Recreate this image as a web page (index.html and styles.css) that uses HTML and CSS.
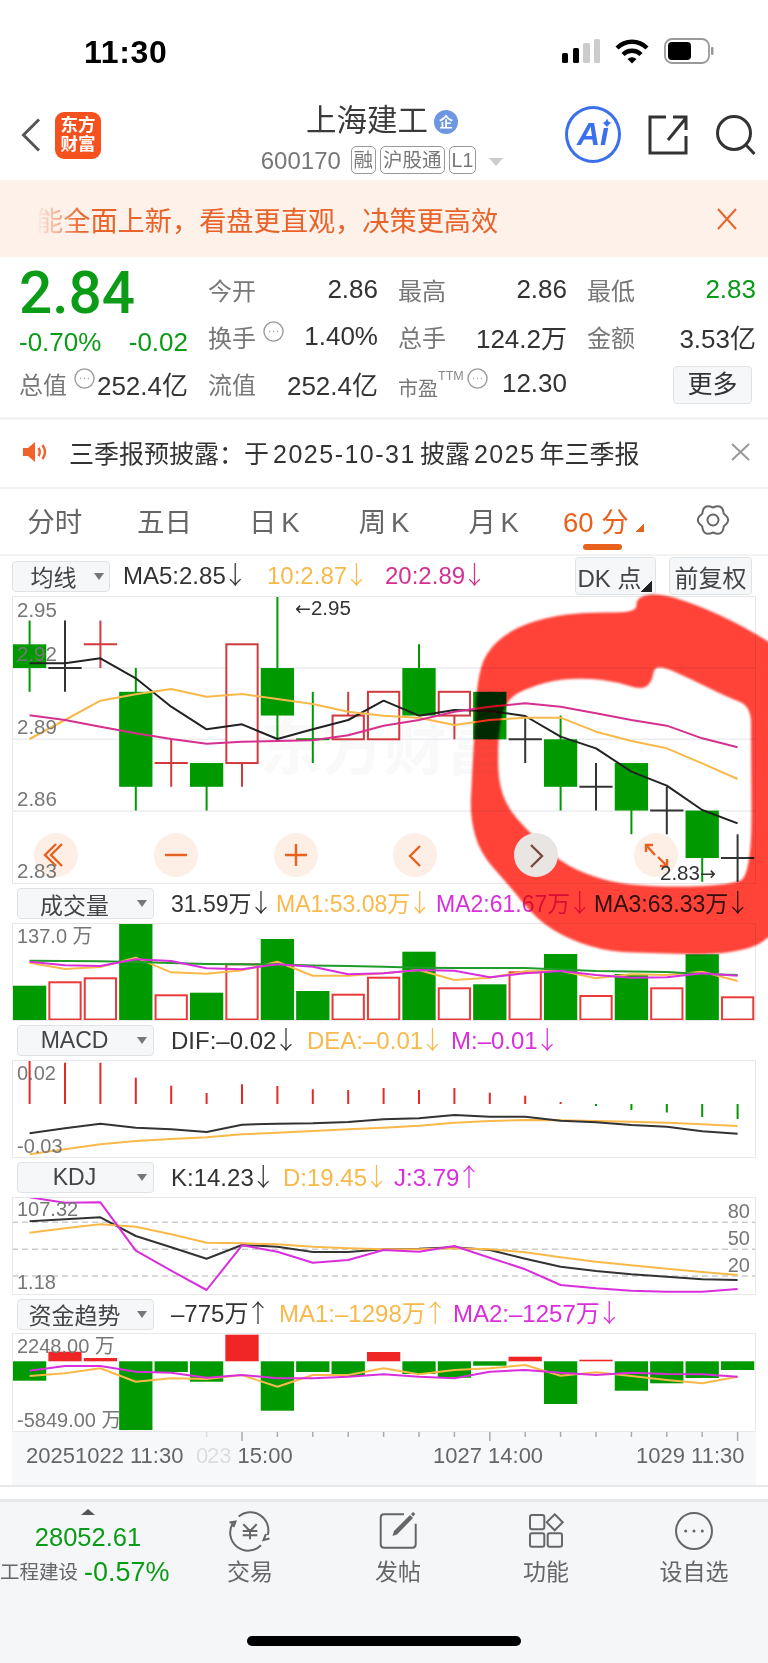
FILE: index.html
```html
<!DOCTYPE html>
<html lang="zh">
<head>
    <meta charset="UTF-8">
    <meta name="viewport" content="width=device-width, initial-scale=1.0">
    <title>上海建工 600170</title>
    <link rel="stylesheet" href="styles.css">
</head>
<body>
<div class="page">

    <!-- Barra di stato -->
    <div class="status">
        <span class="time">11:30</span>
        <svg class="status-icons" width="154" height="27" viewBox="0 0 154 27">
            <rect x="0" y="15" width="6" height="10" rx="1.5" fill="#000"/>
            <rect x="11" y="10" width="6" height="15" rx="1.5" fill="#000"/>
            <rect x="21" y="5" width="7" height="20" rx="1.5" fill="#ccc"/>
            <rect x="32" y="1" width="6" height="24" rx="1.5" fill="#ccc"/>
            <g transform="translate(53 1)">
                <path d="M2 9A21.2 21.2 0 0 1 32 9" fill="none" stroke="#000" stroke-width="4.4"/>
                <path d="M8 15.5A12.7 12.7 0 0 1 26 15.5" fill="none" stroke="#000" stroke-width="4.4"/>
                <path d="M12.5 20L17 24.5L21.5 20A6.4 6.4 0 0 0 12.5 20Z" fill="#000"/>
            </g>
            <rect x="103" y="1" width="44" height="24" rx="7" fill="none" stroke="#999" stroke-width="1.8"/>
            <rect x="106" y="4" width="23" height="18" rx="4" fill="#000"/>
            <rect x="149" y="9" width="2.5" height="8" rx="1" fill="#999"/>
        </svg>
    </div>

    <!-- Titolo -->
    <div class="nav">
        <div class="nav-left">
            <svg class="back" width="20" height="34" viewBox="0 0 20 34"><path d="M18 1.5L2.5 17L18 32.5" fill="none" stroke="#555" stroke-width="3"/></svg>
            <div class="logo"><span>东方</span><span>财富</span></div>
        </div>
        <div class="nav-title">
            <div class="name">上海建工<span class="badge">企</span></div>
            <div class="code">600170
                <span class="tag tag-first">融</span><span class="tag">沪股通</span><span class="tag">L1</span><span class="code-caret"></span>
            </div>
        </div>
        <div class="nav-right">
            <div class="ai">Ai<svg class="ai-star" width="10" height="10" viewBox="0 0 10 10"><path d="M5 0Q5.6 4.4 10 5Q5.6 5.6 5 10Q4.4 5.6 0 5Q4.4 4.4 5 0Z" fill="#3a6fee"/></svg></div>
            <svg class="share" width="40" height="40" viewBox="0 0 40 40"><path d="M18 2H2V38H38V21M20 25L38 3M25 2H38V15" fill="none" stroke="#333" stroke-width="3"/></svg>
            <svg class="search" width="40" height="40" viewBox="0 0 40 40"><circle cx="18" cy="18" r="16.5" fill="none" stroke="#333" stroke-width="3"/><path d="M30 30L38.5 39" fill="none" stroke="#333" stroke-width="3"/></svg>
        </div>
    </div>

    <!-- Avviso arancione -->
    <div class="promo">
        <span class="promo-text">能全面上新，看盘更直观，决策更高效</span>
        <svg class="promo-close" width="20" height="22" viewBox="0 0 20 22"><path d="M1 1L19 21M19 1L1 21" fill="none" stroke="#e8632a" stroke-width="2"/></svg>
    </div>

    <!-- Quotazione -->
    <div class="quote">
        <div class="cell"><span class="price">2.84</span></div>
        <div class="cell"><span class="lab">今开</span><span class="val">2.86</span></div>
        <div class="cell"><span class="lab">最高</span><span class="val">2.86</span></div>
        <div class="cell"><span class="lab">最低</span><span class="val down">2.83</span></div>

        <div class="cell cell-change"><span class="val down">-0.70%</span><span class="val down">-0.02</span></div>
        <div class="cell"><span class="lab">换手</span><svg class="hint" viewBox="0 0 22 22"><circle cx="11" cy="11" r="10" fill="none" stroke="#999" stroke-width="1.4"/><path d="M6.5 11h1M10.5 11h1M14.5 11h1" stroke="#999" stroke-width="1.6"/></svg><span class="val">1.40%</span></div>
        <div class="cell"><span class="lab">总手</span><span class="val">124.2万</span></div>
        <div class="cell"><span class="lab">金额</span><span class="val">3.53亿</span></div>

        <div class="cell"><span class="lab">总值</span><svg class="hint" viewBox="0 0 22 22"><circle cx="11" cy="11" r="10" fill="none" stroke="#999" stroke-width="1.4"/><path d="M6.5 11h1M10.5 11h1M14.5 11h1" stroke="#999" stroke-width="1.6"/></svg><span class="val">252.4亿</span></div>
        <div class="cell"><span class="lab">流值</span><span class="val">252.4亿</span></div>
        <div class="cell"><span class="lab lab-small">市盈</span><span class="ttm">TTM</span><svg class="hint hint-tight" viewBox="0 0 22 22"><circle cx="11" cy="11" r="10" fill="none" stroke="#999" stroke-width="1.4"/><path d="M6.5 11h1M10.5 11h1M14.5 11h1" stroke="#999" stroke-width="1.6"/></svg><span class="val">12.30</span></div>
        <div class="cell cell-more"><span class="more">更多</span></div>
    </div>

    <div class="sep sep-thick"></div>

    <!-- Annuncio -->
    <div class="notice">
        <svg class="horn" width="26" height="20" viewBox="0 0 26 20"><path d="M1 6H6L13 0V20L6 14H1Z" fill="#f0622a"/><path d="M16.5 6Q19 10 16.5 14M20.5 3Q25.5 10 20.5 17" fill="none" stroke="#f0622a" stroke-width="2.4"/></svg>
        <span class="notice-text">三季报预披露：于<span class="num">2025-10-31</span>披露<span class="num">2025</span>年三季报</span>
        <svg class="notice-close" width="19" height="18" viewBox="0 0 19 18"><path d="M1 1L18 17M18 1L1 17" fill="none" stroke="#999" stroke-width="2"/></svg>
    </div>

    <div class="sep"></div>

    <!-- Schede periodo -->
    <div class="tabs">
        <span class="tab">分时</span>
        <span class="tab">五日</span>
        <span class="tab">日 K</span>
        <span class="tab">周 K</span>
        <span class="tab">月 K</span>
        <span class="tab tab-on">60 分<i class="tab-corner"></i></span>
        <svg class="gear" width="34" height="34" viewBox="0 0 34 34"><path d="M27.8 10.75Q36.5 17 27.8 23.25Q26.75 33.9 17 29.5Q7.25 33.9 6.2 23.25Q-2.5 17 6.2 10.75Q7.25 .1 17 4.5Q26.75 .1 27.8 10.75Z" fill="none" stroke="#666" stroke-width="2"/><circle cx="17" cy="17" r="5.5" fill="none" stroke="#666" stroke-width="2"/></svg>
    </div>

    <div class="sep"></div>

    <!-- K-line -->
    <div class="row row-first">
        <div class="chip chip-ma"><span class="chip-name">均线</span><i class="caret"></i></div>
        <div class="stats stats-ma">
            <span class="stat">MA5:2.85<b>↓</b></span>
            <span class="stat orange">10:2.87<b>↓</b></span>
            <span class="stat pink">20:2.89<b>↓</b></span>
        </div>
        <div class="chip chip-plain chip-dk">DK 点<i class="chip-corner"></i></div>
        <div class="chip chip-plain chip-fq">前复权</div>
    </div>
    <svg class="plot plot-k" viewBox="12 596 744 288">
        <text class="mark" x="260" y="770">东方财富</text>
        <g id="kGrid"></g>
        <g id="kBody"></g>
        <text class="scale" x="17" y="617">2.95</text>
        <text class="scale" x="17" y="661">2.92</text>
        <text class="scale" x="17" y="734">2.89</text>
        <text class="scale" x="17" y="806">2.86</text>
        <text class="note" x="295" y="615"><tspan class="note-arrow">←</tspan>2.95</text>
        <g class="zoom-btn"><circle cx="56" cy="855" r="22"/><path d="M62 844L51 855L62 866M56 844L45 855L56 866"/></g>
        <g class="zoom-btn"><circle cx="176" cy="855" r="22"/><path d="M165 855H187"/></g>
        <g class="zoom-btn"><circle cx="296" cy="855" r="22"/><path d="M285 855H307M296 844V866"/></g>
        <g class="zoom-btn"><circle cx="415" cy="855" r="22"/><path d="M420 846L410 856L420 866"/></g>
        <g class="zoom-btn"><circle cx="656" cy="855" r="22"/><path d="M646 845L655 855M646 852V845H653M658 857L667 866M667 859V866H660"/></g>
        <text class="scale" x="17" y="878">2.83</text>
        <text class="note" x="660" y="880">2.83<tspan class="note-arrow">→</tspan></text>
    </svg>

    <!-- Volume -->
    <div class="row">
        <div class="chip chip-wide"><span class="chip-name">成交量</span><i class="caret"></i></div>
        <div class="stats stats-vol">
            <span class="stat">31.59万<b>↓</b></span>
            <span class="stat orange">MA1:53.08万<b>↓</b></span>
            <span class="stat violet">MA2:61.67万<b>↓</b></span>
            <span class="stat">MA3:63.33万<b>↓</b></span>
        </div>
    </div>
    <svg class="plot" viewBox="12 923 744 98">
        <g id="volBody"></g>
        <text class="scale scale-sm" x="17" y="943">137.0 万</text>
    </svg>

    <!-- MACD -->
    <div class="row">
        <div class="chip chip-wide"><span class="chip-name">MACD</span><i class="caret"></i></div>
        <div class="stats stats-macd">
            <span class="stat">DIF:–0.02<b>↓</b></span>
            <span class="stat orange">DEA:–0.01<b>↓</b></span>
            <span class="stat violet">M:–0.01<b>↓</b></span>
        </div>
    </div>
    <svg class="plot" viewBox="12 1060 744 98">
        <g id="macdBody"></g>
        <text class="scale scale-sm" x="17" y="1080">0.02</text>
        <text class="scale scale-sm" x="17" y="1153">-0.03</text>
    </svg>

    <!-- KDJ -->
    <div class="row">
        <div class="chip chip-wide"><span class="chip-name">KDJ</span><i class="caret"></i></div>
        <div class="stats stats-kdj">
            <span class="stat">K:14.23<b>↓</b></span>
            <span class="stat orange">D:19.45<b>↓</b></span>
            <span class="stat violet">J:3.79<b>↑</b></span>
        </div>
    </div>
    <svg class="plot" viewBox="12 1197 744 98">
        <g id="kdjBody"></g>
        <text class="scale scale-sm" x="17" y="1216">107.32</text>
        <text class="scale scale-sm" x="17" y="1289">1.18</text>
        <text class="scale scale-sm scale-end" x="750" y="1218">80</text>
        <text class="scale scale-sm scale-end" x="750" y="1245">50</text>
        <text class="scale scale-sm scale-end" x="750" y="1272">20</text>
    </svg>

    <!-- Flusso di capitale -->
    <div class="row row-short">
        <div class="chip chip-wide"><span class="chip-name">资金趋势</span><i class="caret"></i></div>
        <div class="stats stats-flow">
            <span class="stat">–775万<b>↑</b></span>
            <span class="stat orange">MA1:–1298万<b>↑</b></span>
            <span class="stat violet">MA2:–1257万<b>↓</b></span>
        </div>
    </div>
    <svg class="plot plot-flow" viewBox="12 1333 744 99">
        <g id="flowBody"></g>
        <text class="scale scale-sm" x="17" y="1353">2248.00 万</text>
        <text class="scale scale-sm" x="17" y="1427">-5849.00 万</text>
    </svg>

    <svg class="plot-axis" viewBox="12 1432 744 53">
        <g id="axisTicks"></g>
        <text class="tick-label" x="26" y="1463">20251022 11:30</text>
        <text class="tick-label tick-faded" x="196" y="1463">0</text>
        <text class="tick-label" x="207" y="1463"><tspan class="tick-faded">23</tspan> 15:00</text>
        <text class="tick-label" x="433" y="1463">1027 14:00</text>
        <text class="tick-label" x="636" y="1463">1029 11:30</text>
    </svg>

    <div class="gap-line"></div>

    <!-- Barra inferiore -->
    <div class="footer">
        <div class="foot-grid">
            <div class="foot-index">
                <i class="foot-up"></i>
                <div class="foot-value">28052.61</div>
                <div class="foot-sector"><span>工程建设</span><b>-0.57%</b></div>
            </div>
            <div class="foot-item">
                <svg class="foot-icon" width="44" height="44" viewBox="0 0 44 44"><path d="M5 14A18 18 0 0 0 33 36.3M1.5 13.5L7.5 12.5L5.5 18M10.7 7.5A18 18 0 0 1 39.7 26M41.5 29.5L35.5 31L38 25M15.3 15.3L22 22L28.7 15.3M22 22V30.3M14.7 22H29.3M14.7 26.3H29.3"/></svg>
                <span>交易</span>
            </div>
            <div class="foot-item">
                <svg class="foot-icon" width="44" height="44" viewBox="0 0 44 44"><path d="M28 5.3H8Q4.7 5.3 4.7 8.7V35.3Q4.7 38.7 8 38.7H36.4Q39.7 38.7 39.7 35.3V14.7"/><path class="solid" d="M16.5 27L18 22L34 6L37 9L21 25.5Z"/><path class="solid" d="M35 5L36.5 3.5Q37.5 3 38.5 4Q39.5 5 38.5 6L37 7.5Z"/></svg>
                <span>发帖</span>
            </div>
            <div class="foot-item">
                <svg class="foot-icon" width="44" height="44" viewBox="0 0 44 44"><rect x="6" y="6" width="14.3" height="14.3" rx="2"/><rect x="6" y="24.3" width="14.3" height="13.4" rx="2"/><rect x="23.7" y="24.3" width="14.3" height="13.4" rx="2"/><path d="M30.7 5.3L38.7 13.3L30.7 21.3L22.7 13.3Z"/></svg>
                <span>功能</span>
            </div>
            <div class="foot-item">
                <svg class="foot-icon" width="44" height="44" viewBox="0 0 44 44"><circle cx="22" cy="22" r="18"/><circle class="solid" cx="13.7" cy="22" r="1.5"/><circle class="solid" cx="22" cy="22" r="1.5"/><circle class="solid" cx="30.3" cy="22" r="1.5"/></svg>
                <span>设自选</span>
            </div>
        </div>
        <div class="home-bar"></div>
    </div>

    <!-- Cerchio rosso disegnato sopra lo screenshot -->
    <svg class="ring" width="768" height="1663" viewBox="0 0 768 1663"><path id="ringPath"/></svg>
    <svg class="ring-btn" width="44" height="44" viewBox="0 0 44 44"><circle cx="22" cy="22" r="22" fill="#e9e5e3"/><path d="M17 12L28 23L17 34" fill="none" stroke="#7a4a3c" stroke-width="2.4"/></svg>
</div>
<script src="charts.js"></script>
</body>
</html>
```

FILE: styles.css
```css
/* Base */
html, body {
    margin: 0;
    background-color: #fff;
}

body {
    font-family: "Liberation Sans", "Noto Sans CJK SC", sans-serif;
    color: #333;
}

.page {
    position: relative;
    width: 768px;
    height: 1663px;
    overflow: hidden;
    background-color: #fff;
}

/* Status bar */
.status {
    height: 90px;
    display: flex;
    justify-content: space-between;
    box-sizing: border-box;
    padding: 36px 52px 0 84px;
}

.time {
    font-size: 32px;
    line-height: 32px;
    font-weight: 700;
    letter-spacing: .7px;
    color: #000;
}

.status-icons {
    margin-top: 2px;
}

/* Nav */
.nav {
    height: 90px;
    display: grid;
    grid-template-columns: 200px 364px 1fr;
}

.nav-left {
    display: flex;
    align-items: center;
    padding-left: 21px;
}

.logo {
    margin-left: 14px;
    width: 46px;
    height: 47px;
    border-radius: 9px;
    background-color: #f4511e;
    color: #fff;
    font-size: 17.5px;
    line-height: 19px;
    font-weight: 700;
    display: flex;
    flex-direction: column;
    align-items: center;
    justify-content: center;
}

.nav-title {
    text-align: center;
    padding-top: 13px;
}

.name {
    font-size: 30.5px;
    line-height: 34px;
    color: #3a3a3a;
}

.badge {
    display: inline-block;
    width: 24px;
    height: 24px;
    margin-left: 6px;
    border-radius: 50%;
    background-color: #6d97e0;
    color: #fff;
    font-size: 14px;
    line-height: 24px;
    font-weight: 700;
    vertical-align: 4px;
}

.code {
    margin-top: 9px;
    font-size: 24px;
    line-height: 30px;
    color: #777;
    white-space: nowrap;
}

.tag {
    display: inline-block;
    box-sizing: border-box;
    height: 28px;
    margin-left: 4px;
    padding: 0 2px;
    border: 1px solid #999;
    border-radius: 5px;
    font-size: 19.5px;
    line-height: 26px;
    vertical-align: 2px;
}

.tag-first {
    margin-left: 3px;
}

.code-caret {
    display: inline-block;
    margin-left: 13px;
    border-left: 7px solid transparent;
    border-right: 7px solid transparent;
    border-top: 8px solid #ccc;
    vertical-align: 3px;
}

.nav-right {
    display: flex;
    align-items: center;
    padding-left: 1px;
    margin-top: -1px;
}

.ai {
    position: relative;
    box-sizing: border-box;
    width: 56px;
    height: 57px;
    border: 3px solid #3a6fee;
    border-radius: 50%;
    color: #3a6fee;
    font-size: 32px;
    line-height: 51px;
    font-weight: 700;
    font-style: italic;
    text-align: center;
}

.ai-star {
    position: absolute;
    left: 34px;
    top: 9px;
}

.share {
    margin-left: 27px;
}

.search {
    margin-left: 28px;
}

/* Banner */
.promo {
    height: 77px;
    display: flex;
    align-items: center;
    justify-content: space-between;
    padding: 0 31px 0 36px;
    background-color: #fdf1ea;
    color: #e8632a;
}

.promo-text {
    font-size: 27.2px;
    -webkit-mask-image: linear-gradient(to right, transparent, #000 46px);
    mask-image: linear-gradient(to right, transparent, #000 46px);
}

/* Quote */
.quote {
    box-sizing: border-box;
    height: 160px;
    padding: 10px 12px 0 19px;
    display: grid;
    grid-template-columns: 169px 170px 169px 169px;
    grid-auto-rows: 47px;
    column-gap: 20px;
}

.cell {
    display: flex;
    align-items: center;
    white-space: nowrap;
}

.cell-change {
    justify-content: space-between;
    padding-top: 12px;
}

.cell-more {
    justify-content: flex-end;
    padding-right: 4px;
}

.price {
    font-family: Roboto, "Liberation Sans", sans-serif;
    font-size: 58.5px;
    font-weight: 500;
    line-height: 47px;
    color: #0c9b17;
    padding-top: 6px;
}

.lab {
    font-size: 24px;
    color: #777;
    margin-top: -2px;
}

.lab-small {
    font-size: 20px;
    margin-top: 6px;
}

.val {
    margin-left: auto;
    font-size: 26px;
    color: #333;
    margin-top: -2px;
}

.cell-change .val {
    margin-left: 0;
}

.val.down {
    color: #0c9b17;
}

.ttm {
    font-size: 12.5px;
    color: #888;
    margin-bottom: 18px;
}

.hint {
    width: 21px;
    height: 21px;
    margin: 0 0 12px 7px;
}

.hint-tight {
    margin-left: 3px;
}

.more {
    box-sizing: border-box;
    width: 79px;
    height: 38px;
    background-color: #f5f7f8;
    border: 1px solid #e0e3e5;
    border-radius: 4px;
    font-size: 25px;
    line-height: 35px;
    text-align: center;
}

/* Separators */
.sep {
    height: 2px;
    background-color: #f3f3f3;
}

.sep-thick {
    height: 3px;
}

/* Notice */
.notice {
    height: 67px;
    display: flex;
    align-items: center;
    padding: 0 18px 3px 22px;
    box-sizing: border-box;
}

.notice-text {
    margin-left: 21px;
    font-size: 25px;
    color: #333;
    white-space: nowrap;
}

.num {
    margin: 0 4px;
    letter-spacing: 1.5px;
}

.notice-close {
    margin-left: auto;
}

/* Tabs */
.tabs {
    box-sizing: border-box;
    height: 65px;
    padding-bottom: 4px;
    display: grid;
    grid-template-columns: repeat(7, 1fr);
    align-items: center;
    justify-items: center;
}

.tab {
    position: relative;
    font-size: 27.5px;
    color: #666;
    word-spacing: -3px;
}

.tab-on {
    color: #e8621e;
    word-spacing: 0;
}

.tab-on::after {
    content: "";
    position: absolute;
    left: 20px;
    right: 22px;
    bottom: -10px;
    height: 6px;
    border-radius: 3px;
    background-color: #e8621e;
}

.tab-corner {
    display: inline-block;
    width: 8px;
    height: 8px;
    margin-left: 7px;
    background: linear-gradient(to bottom right, transparent 50%, #e8621e 50%);
}

/* Chip rows */
.row {
    height: 39px;
    display: flex;
    align-items: center;
    white-space: nowrap;
}

.row-first {
    height: 40px;
}

.row-short {
    height: 38px;
}

.chip {
    box-sizing: border-box;
    display: flex;
    align-items: center;
    height: 31px;
    background-color: #f5f7f8;
    border: 1px solid #e0e3e5;
    border-radius: 4px;
    font-size: 23px;
    color: #444;
}

.chip-wide {
    width: 137px;
    margin-left: 17px;
    padding-right: 6px;
}

.chip-ma {
    width: 98px;
    margin-left: 12px;
    padding-right: 5px;
}

.chip-name {
    flex: 1;
    text-align: center;
}

.chip-wide .chip-name {
    padding-right: 6px;
}

.caret {
    border-left: 5px solid transparent;
    border-right: 5px solid transparent;
    border-top: 7px solid #777;
}

.chip-plain {
    position: relative;
    height: 38px;
    justify-content: center;
    font-size: 24px;
}

.chip-dk {
    width: 81px;
    margin-left: auto;
    padding-right: 12px;
}

.chip-fq {
    width: 83px;
    margin: 0 16px 0 13px;
}

.chip-corner {
    position: absolute;
    right: 3px;
    bottom: 2px;
    width: 12px;
    height: 11px;
    background: linear-gradient(to bottom right, transparent 50%, #222 50%);
}

.stats {
    display: grid;
    margin-left: 17px;
}

.stats-ma {
    margin-left: 13px;
    grid-template-columns: 144px 118px auto;
}

.stats-vol {
    grid-template-columns: 105px 160px 158px auto;
}

.stats-macd {
    grid-template-columns: 136px 144px auto;
}

.stats-kdj {
    grid-template-columns: 112px 111px auto;
}

.stats-flow {
    grid-template-columns: 108px 174px auto;
}

.stat {
    font-size: 24px;
    line-height: 30px;
    height: 30px;
    color: #333;
}

.stats-vol .stat {
    font-size: 23px;
}

.stat b {
    display: inline-block;
    margin: 0 -4px 0 -3px;
    font-family: "Noto Sans CJK SC", sans-serif;
    font-size: 25px;
    line-height: 24px;
    font-weight: 300;
}

.orange {
    color: #f9b94a;
}

.pink {
    color: #d6308f;
}

.violet {
    color: #d92edc;
}

/* Charts */
.plot {
    display: block;
    width: 744px;
    height: 98px;
    margin-left: 12px;
    outline: 1px solid #e8e8e8;
    outline-offset: -1px;
}

.plot-k {
    height: 288px;
}

.plot-flow {
    height: 99px;
}

.plot-axis {
    display: block;
    width: 744px;
    height: 53px;
    margin-left: 12px;
    background-color: #f7f8fa;
}

.mark {
    font-size: 62px;
    font-weight: 700;
    fill: #f9f9f9;
}

.scale {
    font-size: 20.5px;
    fill: #777;
}

.scale-sm {
    font-size: 20px;
}

.scale-end {
    text-anchor: end;
}

.note {
    font-size: 20.5px;
    fill: #333;
}

.note-arrow {
    font-family: "DejaVu Sans", sans-serif;
    font-size: 19px;
}

.zoom-btn circle {
    fill: #fdeee6;
}

.zoom-btn path {
    fill: none;
    stroke: #e8621e;
    stroke-width: 2.4;
}

.tick-label {
    font-size: 22px;
    fill: #666;
}

.tick-faded {
    fill: #ddd;
}

/* Footer */
.gap-line {
    height: 12px;
    border-top: 2px solid #e8e8e8;
}

.footer {
    height: 164px;
    border-top: 3px solid #e6e8ea;
    background-color: #f4f6f8;
}

.foot-grid {
    display: grid;
    grid-template-columns: 176px repeat(4, 148px);
    padding-top: 7px;
}

.foot-index {
    text-align: center;
    white-space: nowrap;
}

.foot-up {
    display: block;
    width: 0;
    margin: 0 auto;
    border-left: 7px solid transparent;
    border-right: 7px solid transparent;
    border-bottom: 6px solid #555;
}

.foot-value {
    margin-top: 7px;
    font-size: 25.5px;
    line-height: 30px;
    color: #0c9b17;
}

.foot-sector {
    margin-top: 5px;
    line-height: 30px;
    display: flex;
    align-items: center;
    column-gap: 6px;
}

.foot-sector span {
    font-size: 19.5px;
    color: #666;
}

.foot-sector b {
    font-size: 27px;
    font-weight: 400;
    color: #0c9b17;
}

.foot-item {
    display: flex;
    flex-direction: column;
    align-items: center;
    font-size: 23px;
    line-height: 30px;
    color: #666;
}

.foot-item span {
    margin-top: 4px;
}

.foot-icon {
    fill: none;
    stroke: #666;
    stroke-width: 2;
}

.foot-icon .solid {
    fill: #666;
    stroke: none;
}

.home-bar {
    width: 274px;
    height: 10px;
    margin: 49px 0 0 247px;
    border-radius: 5px;
    background-color: #000;
}

/* Red marker drawn on top of the screenshot */
.ring {
    position: absolute;
    left: 0;
    top: 0;
    mix-blend-mode: multiply;
    pointer-events: none;
}

.ring path {
    fill: #ff4339;
    fill-rule: evenodd;
    filter: blur(1px);
}

.ring-btn {
    position: absolute;
    left: 514px;
    top: 833px;
}
```

FILE: charts.js
```js
// colonne: centro della candela i
const cx = i => 29.6 + 35.4 * i;
const BAR = 33.3;
const GREEN = '#009a00';
const RED = '#d0393d';
const DARK = '#333';
const ORANGE = '#f9b94a';
const PINK = '#d6308f';
const VIOLET = '#d92edc';

const yPrice = p => 739.3 + (2.89 - p) * 2375;

function line(points, color, width) {
    const pts = points.map((y, i) => cx(i).toFixed(1) + ',' + y).join(' ');
    return `<polyline points="${pts}" fill="none" stroke="${color}" stroke-width="${width || 2}" stroke-linejoin="round"/>`;
}

function rect(x, y, w, h, fill) {
    return `<rect x="${x}" y="${y}" width="${w}" height="${h}" fill="${fill}"/>`;
}

// linee in coordinate di zoom 3x, a partire dalla y 555
const z = v => 555 + v / 3;

// [colore, massimo, apertura, chiusura, minimo]
const candles = [
    ['g', 2.94, 2.93, 2.92, 2.91],
    ['k', 2.94, 2.92, 2.92, 2.91],
    ['r', 2.94, 2.93, 2.93, 2.92],
    ['g', 2.92, 2.91, 2.87, 2.86],
    ['r', 2.89, 2.88, 2.88, 2.87],
    ['g', 2.88, 2.88, 2.87, 2.86],
    ['r', 2.93, 2.93, 2.88, 2.87],
    ['g', 2.95, 2.92, 2.90, 2.89],
    ['g', 2.91, 2.89, 2.89, 2.88],
    ['r', 2.91, 2.90, 2.89, 2.89],
    ['r', 2.91, 2.91, 2.89, 2.89],
    ['g', 2.93, 2.92, 2.90, 2.90],
    ['r', 2.91, 2.91, 2.90, 2.89],
    ['g', 2.91, 2.91, 2.89, 2.89],
    ['k', 2.90, 2.89, 2.89, 2.88],
    ['g', 2.90, 2.89, 2.87, 2.86],
    ['k', 2.88, 2.87, 2.87, 2.86],
    ['g', 2.88, 2.88, 2.86, 2.85],
    ['k', 2.87, 2.86, 2.86, 2.85],
    ['g', 2.86, 2.86, 2.84, 2.83],
    ['k', 2.85, 2.84, 2.84, 2.83]
];

const tones = { g: GREEN, r: RED, k: DARK };

function drawCandles() {
    let html = '';
    candles.forEach((c, i) => {
        const x = cx(i);
        const col = tones[c[0]];
        const top = yPrice(c[2]);
        const bot = yPrice(c[3]);
        html += `<line x1="${x}" x2="${x}" y1="${yPrice(c[1])}" y2="${yPrice(c[4])}" stroke="${col}" stroke-width="2"/>`;
        if (top === bot) {
            html += `<line x1="${x - BAR / 2}" x2="${x + BAR / 2}" y1="${top}" y2="${top}" stroke="${col}" stroke-width="2"/>`;
        } else if (c[0] === 'r') {
            html += `<rect x="${x - BAR / 2 + 1}" y="${top}" width="${BAR - 2}" height="${bot - top}" fill="#fff" stroke="${col}" stroke-width="2"/>`;
        } else {
            html += rect(x - BAR / 2, top, BAR, bot - top, col);
        }
    });
    html += line([325, 325, 310, 370, 455, 523, 508, 552, 523, 495, 437, 482, 465, 468, 483, 545, 580, 650, 692, 765, 805].map(z), '#222');
    html += line([552, 495, 437, 418, 402, 425, 417, 432, 447, 470, 482, 488, 510, 495, 488, 488, 530, 558, 580, 625, 672].map(z), ORANGE);
    html += line([481, 495, 515, 535, 552, 566, 560, 558, 556, 541, 512, 495, 470, 455, 445, 455, 475, 495, 512, 550, 577].map(z), PINK);
    document.getElementById('kBody').innerHTML = html;
    document.getElementById('kGrid').innerHTML = [668, 739.3, 811].map(y =>
        `<line x1="12" x2="756" y1="${y}" y2="${y}" stroke="#ecedf2" stroke-width="1.5"/>`).join('');
}

function drawVolume() {
    const tops = [985.7, 982.3, 978.3, 923.3, 995.3, 992.7, 964.3, 939, 991, 994.7, 977.7,
        951.7, 988.3, 984.3, 972.3, 954, 996, 974, 988.3, 954.3, 997.3];
    const isRed = [0, 1, 1, 0, 1, 0, 1, 0, 0, 1, 1, 0, 1, 0, 1, 0, 1, 0, 1, 0, 1];
    let html = '';
    tops.forEach((y, i) => {
        const x = cx(i) - BAR / 2;
        if (isRed[i]) {
            html += `<rect x="${x + 1}" y="${y}" width="${BAR - 2}" height="${1019.5 - y}" fill="#fff" stroke="#e83a3a" stroke-width="2"/>`;
        } else {
            html += rect(x, y, BAR, 1021 - y, GREEN);
        }
    });
    html += line([962.7, 969, 967, 957.7, 972.3, 973.7, 970.3, 961.7, 975.7, 975.7, 973.3, 970, 980, 977.7, 971.3, 970.7, 978.3, 974.3, 975, 971.7, 981], ORANGE);
    html += line([960.7, 961, 961.3, 962, 963, 964, 964.3, 964.5, 965.5, 966, 966.7, 967.7, 968, 968, 968, 969.5, 971, 971.5, 972, 974, 975], '#1f9c2a');
    html += line([961.7, 965.3, 966, 959.3, 961, 968.3, 969.3, 964.3, 966.7, 974.3, 973.3, 970, 970.7, 977.3, 973.3, 971, 975, 977.7, 977.3, 973.3, 975.7], VIOLET);
    document.getElementById('volBody').innerHTML = html;
}

function drawMacd() {
    const ends = [1061, 1062.7, 1062.7, 1077.7, 1085.7, 1093, 1084.3, 1086, 1089.3, 1090, 1088,
        1090, 1088, 1092.7, 1095.7, 1102, 1106, 1110, 1112.5, 1117, 1119];
    let html = '';
    ends.forEach((y, i) => {
        const up = y < 1104;
        html += rect(cx(i) - 1, up ? y : 1104, 2, up ? 1104 - y : y - 1104, up ? '#e52a2a' : GREEN);
    });
    html += line([1154.3, 1149.3, 1144.3, 1141, 1139, 1137.3, 1134.3, 1132.7, 1131, 1129.3, 1127.7, 1125.7, 1122.7, 1121, 1120, 1120.3, 1121, 1121.7, 1122.7, 1124.3, 1126], ORANGE);
    html += line([1133.3, 1128.3, 1123.7, 1127.7, 1129.3, 1132, 1124.7, 1123.7, 1123.3, 1122, 1119.3, 1118.3, 1115, 1116.7, 1116.7, 1120.7, 1122.3, 1125, 1126.7, 1131.3, 1133.7], DARK);
    document.getElementById('macdBody').innerHTML = html;
}

function drawKdj() {
    let html = [1222.3, 1249.3, 1276].map(y =>
        `<line x1="12" x2="756" y1="${y}" y2="${y}" stroke="#ccc" stroke-width="1.5" stroke-dasharray="6 4"/>`).join('');
    html += line([1221.3, 1219.3, 1217.3, 1236, 1247.3, 1258.7, 1245, 1246.7, 1252, 1252, 1249.3, 1248.7, 1247.3, 1250, 1258.7, 1266.7, 1271, 1274.3, 1276.7, 1279.3, 1280], DARK);
    html += line([1232.7, 1228.3, 1224.3, 1226.7, 1234.3, 1242.7, 1243.3, 1244.3, 1246.7, 1248.3, 1249.3, 1249.3, 1248.3, 1249.3, 1252.3, 1257.3, 1261.7, 1265.3, 1268.7, 1272, 1275], ORANGE);
    html += line([1197.3, 1202.7, 1202.3, 1250.7, 1270.7, 1290, 1245.3, 1251.7, 1262.7, 1260, 1250, 1251.7, 1246, 1257.7, 1269.3, 1285, 1288.3, 1290.7, 1291.7, 1291.7, 1289], VIOLET);
    document.getElementById('kdjBody').innerHTML = html;
}

function drawFlow() {
    const base = 1361.3;
    const ends = [1380.7, 1351.7, 1358, 1430, 1372, 1381.7, 1334.7, 1410.7, 1372, 1376, 1352,
        1374, 1377.7, 1365.7, 1356.7, 1404, 1359.7, 1390.7, 1383.3, 1378, 1370];
    let html = '';
    ends.forEach((y, i) => {
        const up = y < base;
        html += rect(cx(i) - BAR / 2, up ? y : base, BAR, Math.abs(y - base), up ? '#f02525' : GREEN);
    });
    html += line([1376, 1373.3, 1368.3, 1381.7, 1378.3, 1379, 1375, 1386.7, 1375, 1375, 1368.3, 1374.3, 1370, 1368.3, 1365, 1375.7, 1372.3, 1376, 1380, 1383.3, 1376.7], ORANGE);
    html += line([1370.7, 1366, 1366, 1371.7, 1372.7, 1377.7, 1375, 1378.3, 1378.3, 1376.7, 1374.3, 1376.7, 1378.3, 1371.7, 1370, 1372.7, 1375, 1372.7, 1374, 1374.3, 1376.7], VIOLET);
    document.getElementById('flowBody').innerHTML = html;
}

function drawTicks() {
    let html = '';
    for (let i = 5; i <= 20; i++) {
        const long = i === 6 || i === 13 || i === 20;
        const col = i === 5 ? '#ddd' : '#aaa';
        html += `<line x1="${cx(i)}" x2="${cx(i)}" y1="1432" y2="${long ? 1441 : 1437}" stroke="${col}" stroke-width="1.5"/>`;
    }
    document.getElementById('axisTicks').innerHTML = html;
}

// contorno chiuso passante per i punti medi, cosi' resta morbido
function smooth(pts) {
    const mid = (a, b) => [(a[0] + b[0]) / 2, (a[1] + b[1]) / 2];
    const n = pts.length;
    let d = 'M' + mid(pts[n - 1], pts[0]).join(' ');
    pts.forEach((p, i) => {
        d += 'Q' + p.join(' ') + ' ' + mid(p, pts[(i + 1) % n]).join(' ');
    });
    return d + 'Z';
}

function drawRing() {
    const outer = [[636, 597], [660, 593], [700, 606], [743, 626], [790, 655], [790, 920], [768, 938], [753, 948],
        [713, 955], [660, 953], [610, 952], [570, 940], [537, 920], [507, 883], [480, 853], [470, 817],
        [472, 777], [475, 723], [477, 683], [485, 653], [510, 630], [547, 617], [587, 612], [637, 613]];
    const inner = [[523, 690], [553, 680], [587, 678], [617, 682], [642, 690], [652, 682], [655, 663], [693, 680],
        [727, 697], [751, 706], [751, 740], [752, 877], [727, 885], [677, 887], [627, 885], [593, 877],
        [560, 862], [527, 830], [507, 807], [498, 780], [498, 740], [502, 713], [510, 698]];
    document.getElementById('ringPath').setAttribute('d', smooth(outer) + smooth(inner));
}

drawCandles();
drawVolume();
drawMacd();
drawKdj();
drawFlow();
drawTicks();
drawRing();
```
